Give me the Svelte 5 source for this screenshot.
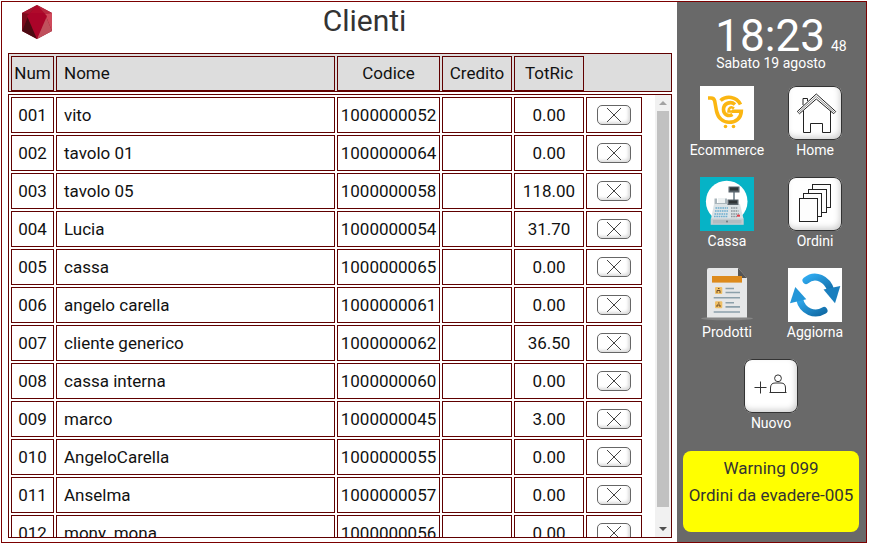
<script>
    import {onMount} from "svelte";

    const clients = [
        { num: '001', name: 'vito', code: '1000000052', credit: '', total: '0.00' },
        { num: '002', name: 'tavolo 01', code: '1000000064', credit: '', total: '0.00' },
        { num: '003', name: 'tavolo 05', code: '1000000058', credit: '', total: '118.00' },
        { num: '004', name: 'Lucia', code: '1000000054', credit: '', total: '31.70' },
        { num: '005', name: 'cassa', code: '1000000065', credit: '', total: '0.00' },
        { num: '006', name: 'angelo carella', code: '1000000061', credit: '', total: '0.00' },
        { num: '007', name: 'cliente generico', code: '1000000062', credit: '', total: '36.50' },
        { num: '008', name: 'cassa interna', code: '1000000060', credit: '', total: '0.00' },
        { num: '009', name: 'marco', code: '1000000045', credit: '', total: '3.00' },
        { num: '010', name: 'AngeloCarella', code: '1000000055', credit: '', total: '0.00' },
        { num: '011', name: 'Anselma', code: '1000000057', credit: '', total: '0.00' },
        { num: '012', name: 'mony_mona', code: '1000000056', credit: '', total: '0.00' }
    ];

    let rows = clients;
    let menu = ['Ecommerce', 'Home', 'Cassa', 'Ordini', 'Prodotti', 'Aggiorna', 'Nuovo'];
    const framed = new Set(['Home', 'Ordini', 'Nuovo']);

    let view;
    let thumbSize = 96; // percent of the track
    let thumbTop = 0;

    function updateThumb() {
        if (!view) return;
        thumbSize = Math.min(100, (view.clientHeight / view.scrollHeight) * 100);
        thumbTop = (view.scrollTop / view.scrollHeight) * 100;
    }

    function scrollList(step) {
        view.scrollTop += step;
        updateThumb();
    }

    function removeClient(num) {
        rows = rows.filter((row) => row.num !== num);
    }

    onMount(updateThumb);
</script>

<svelte:window on:resize={updateThumb} />

<div class="frame">
    <main>
        <header>
            <svg class="logo" viewBox="0 0 30 34" aria-hidden="true">
                <polygon points="15,0 30,8 30,26 15,34 0,26 0,8" fill="#8f0d24" />
                <polygon points="15,0 23,9 7,9" fill="#b00a2b" />
                <polygon points="15,0 7,9 0,8" fill="#a3152f" />
                <polygon points="15,0 30,8 23,9" fill="#b8283f" />
                <polygon points="0,8 7,9 0,26" fill="#7c0c1d" />
                <polygon points="7,9 15,34 0,26" fill="#4c0a12" />
                <polygon points="30,8 23,9 30,26" fill="#cf4a5b" />
                <polygon points="23,9 30,26 15,34" fill="#c0505c" />
                <polygon points="5,11 8,8 22,8 25,11 15,34" fill="#ab0429" />
            </svg>
            <h1>Clienti</h1>
        </header>

        <div class="head">
            <table aria-label="Colonne">
                <thead>
                    <tr>
                        <th class="num">Num</th>
                        <th class="name">Nome</th>
                        <th class="code">Codice</th>
                        <th class="amount">Credito</th>
                        <th class="amount">TotRic</th>
                        <td class="action blank"></td>
                    </tr>
                </thead>
            </table>
        </div>

        <div class="list">
            <div class="view" bind:this={view} on:scroll={updateThumb}>
                <table aria-label="Clienti">
                    <tbody>
                        {#each rows as row (row.num)}
                            <tr>
                                <td class="num">{row.num}</td>
                                <td class="name">{row.name}</td>
                                <td class="code">{row.code}</td>
                                <td class="amount">{row.credit}</td>
                                <td class="amount">{row.total}</td>
                                <td class="action">
                                    <button class="remove" aria-label="Elimina {row.name}" on:click={() => removeClient(row.num)}>
                                        <svg viewBox="0 0 16 16" aria-hidden="true">
                                            <path d="M1 1L15 15M15 1L1 15" />
                                        </svg>
                                    </button>
                                </td>
                            </tr>
                        {/each}
                    </tbody>
                </table>
            </div>
            <div class="scroll">
                <button aria-label="Su" on:click={() => scrollList(-38)}>
                    <svg viewBox="0 0 8 4" aria-hidden="true"><path d="M0 4L4 0L8 4Z" fill="#a3a3a3" /></svg>
                </button>
                <div class="track">
                    <div class="thumb" style="height: {thumbSize}%; top: {thumbTop}%;"></div>
                </div>
                <button aria-label="Giù" on:click={() => scrollList(38)}>
                    <svg viewBox="0 0 8 4" aria-hidden="true"><path d="M0 0L4 4L8 0Z" fill="#505050" /></svg>
                </button>
            </div>
        </div>
    </main>

    <aside>
        <div class="clock">
            <span class="time">18:23</span>
            <span class="seconds">48</span>
        </div>
        <div class="date">Sabato 19 agosto</div>

        <nav>
            {#each menu as item}
                <button class="tile">
                    <span class="icon" class:framed={framed.has(item)}>
                        <svg viewBox="0 0 54 54" aria-hidden="true">
                            {#if item === 'Ecommerce'}
                                <rect width="54" height="54" fill="#fff" />
                                <g fill="none" stroke="#fbb612" stroke-width="3.6">
                                    <path d="M8 12H11Q14 12 14.7 15L16.5 25C18 32 23 36.3 29 36.3C36 36.3 41 32 41.3 25.3H32" />
                                    <path d="M20.5 14.5C26 9.5 36.5 10 40.5 18.5" />
                                    <path d="M35 18.5C30.5 14.5 23.5 17.5 23.5 23.5C23.5 28.5 28.5 31 32.5 28.5" />
                                    <path d="M34 22.5C31 20 28.5 21.5 28.5 25.5H33" stroke-width="2.6" />
                                </g>
                                <circle cx="25.5" cy="40.5" r="1.8" fill="#fbb612" />
                                <circle cx="33.5" cy="40.5" r="1.8" fill="#fbb612" />
                            {:else if item === 'Home'}
                                <g fill="none" stroke="#222" stroke-width="1">
                                    <path d="M15 19V12.5H19.5V15" />
                                    <path d="M28.3 8L9.3 25.5L11.5 27.7L28.3 13L45.7 27.7L47.7 25.5Z" />
                                    <path d="M10.5 26.5L28.3 10.5L46.5 26.5" stroke="#888" />
                                    <path d="M15.5 24.5V46.5H22.5V37.5H34.5V46.5H42.5V25" />
                                </g>
                            {:else if item === 'Cassa'}
                                <rect width="54" height="54" fill="#06b3c6" />
                                <circle cx="26.7" cy="24.5" r="20.8" fill="#fff" />
                                <rect x="33" y="15" width="2" height="8" fill="#8c98a0" />
                                <rect x="28.5" y="9.5" width="11" height="6" fill="#59636a" />
                                <rect x="30" y="10.5" width="8" height="3" fill="#2f3436" />
                                <path d="M14.5 21.5H17V26H25V21.5H27V28H14.5Z" fill="#aab6bc" />
                                <rect x="18" y="21" width="7" height="5" fill="#edf1f2" />
                                <path d="M14 27H40L43.5 42H11Z" fill="#dce3e6" />
                                <rect x="27.5" y="22.5" width="11" height="5.5" fill="#59636a" />
                                <rect x="29" y="23.5" width="8" height="3" fill="#2f3436" />
                                <path d="M15.5 31H28M15 34H28M14.5 37H28M14 39.5H28" stroke="#6baed0" stroke-width="1.6" stroke-dasharray="1.6 .7" />
                                <path d="M31 31H38M31 34H38.5M31 37H39M31 39.5H37" stroke="#8b969d" stroke-width="1.6" stroke-dasharray="1.6 .7" />
                                <rect x="37" y="37.7" width="3" height="2" fill="#e3404a" />
                                <rect x="10.7" y="41.5" width="33" height="6.3" fill="#c3ccd0" />
                                <rect x="13" y="43" width="28.5" height="3.5" fill="#b1bcc1" />
                                <circle cx="27" cy="44.5" r=".9" fill="#66737a" />
                            {:else if item === 'Ordini'}
                                <g fill="#fdfdfd" stroke="#222" stroke-width="1">
                                    <rect x="24.5" y="7.5" width="18" height="23" />
                                    <rect x="20.5" y="12.5" width="18" height="23" />
                                    <rect x="15.5" y="16.5" width="18" height="23" />
                                    <rect x="11.5" y="21.5" width="18" height="23" />
                                </g>
                            {:else if item === 'Prodotti'}
                                <ellipse cx="27" cy="50.5" rx="26" ry="1.8" fill="#858585" />
                                <path d="M9 0H38L47 10V49.5H7V2Q7 0 9 0Z" fill="#e6e7e8" />
                                <path d="M38 0L47 10H40Q38 10 38 8Z" fill="#555" />
                                <rect x="12" y="8" width="30" height="6.6" fill="#dd8a1c" />
                                <rect x="15" y="19" width="7.3" height="7" rx="1" fill="#efbf66" />
                                <rect x="15" y="33.3" width="7.3" height="7" rx="1" fill="#efbf66" />
                                <path d="M17 25V22.5H20V25M18 20.5H19.5M17 39V37H20V39M18 35H19.5" fill="none" stroke="#6d4b27" stroke-width="1" />
                                <path d="M25.5 20.5H34M25.5 24.5H40M13.7 29.8H40M25.5 34.7H34M25.5 38.9H40M13.7 44H40" stroke="#8ca0aa" stroke-width="1.6" />
                            {:else if item === 'Aggiorna'}
                                <defs>
                                    <linearGradient id="sync" x1="0" y1="0" x2="1" y2="1">
                                        <stop offset="0" stop-color="#2fa9ee" />
                                        <stop offset="1" stop-color="#126da8" />
                                    </linearGradient>
                                </defs>
                                <rect width="54" height="54" fill="#fff" />
                                <path d="M18 12.5C27 5 39.5 10.5 43 23" fill="none" stroke="url(#sync)" stroke-width="7" stroke-linecap="round" />
                                <path d="M35.5 21.5L52.3 18L47 35.3Z" fill="#1a7fbe" />
                                <path d="M36 42.5C27 48 14.5 44 11.5 31" fill="none" stroke="url(#sync)" stroke-width="7" stroke-linecap="round" />
                                <path d="M7.3 19L18.3 31.3L2 35.3Z" fill="#2496d8" />
                            {:else}
                                <g fill="none" stroke="#333" stroke-width="1">
                                    <path d="M16.5 22.5V34.5M10.5 28.5H22.5" />
                                    <circle cx="34" cy="19.3" r="3.4" />
                                    <path d="M25.5 33.5H42.5M26.5 33.5V29Q26.5 24 31 24H37Q41.5 24 41.5 29V33.5" />
                                </g>
                            {/if}
                        </svg>
                    </span>
                    <span class="label">{item}</span>
                </button>
            {/each}
        </nav>

        <div class="warning" role="status">
            <div>Warning 099</div>
            <div>Ordini da evadere-005</div>
        </div>
    </aside>
</div>

<style>
    :global(body) {
        margin: 0;
        background: #fff;
        font-family: Roboto, "Liberation Sans", sans-serif;
    }

    .frame {
        display: flex;
        box-sizing: border-box;
        height: calc(100vh - 2px);
        margin: 1px 2px 1px 1px;
        border: 1px solid #7b0000;
    }

    main {
        display: flex;
        flex: 1;
        flex-direction: column;
        min-width: 0;
        padding-bottom: 4px;
    }

    header {
        display: flex;
        height: 51px;
        padding-left: 20px;
    }

    .logo {
        width: 30px;
        height: 34px;
        margin-top: 3px;
    }

    h1 {
        flex: 1;
        margin: 0;
        font-size: 30px;
        font-weight: 400;
        line-height: 38px;
        text-align: center;
        color: #333;
    }

    .head,
    .list {
        margin: 0 5px 0 6px;
        border: 1px solid #600000;
    }

    .head {
        padding-right: 27px;
        background: #ddd;
    }

    .head table {
        margin-bottom: -2px;
    }

    .list {
        display: flex;
        flex: 1;
        min-height: 0;
        margin-top: 2px;
    }

    .view {
        flex: 1;
        padding-right: 11px;
        overflow-y: auto;
        scrollbar-width: none;
    }

    table {
        width: 100%;
        table-layout: fixed;
        border-spacing: 2px;
        font-size: 17px;
        color: #111;
    }

    th,
    td {
        box-sizing: border-box;
        height: 36px;
        padding: 0 0 1px;
        border: 1px solid #600000;
        font-weight: 400;
        line-height: 20px;
        text-align: center;
    }

    .head th,
    .head td {
        height: 35px;
    }

    .num {
        width: 43px;
    }

    th.name,
    td.name {
        padding-left: 7px;
        text-align: left;
    }

    .code {
        width: 103px;
    }

    .amount {
        width: 70px;
    }

    .action {
        width: 56px;
    }

    td.blank {
        border: none;
    }

    .remove {
        display: block;
        width: 34px;
        height: 20px;
        margin: 0 auto;
        padding: 0;
        border: 1px solid #666;
        border-radius: 5px;
        background: #fff;
        box-shadow: inset -2px -2px 3px #ddd;
        cursor: pointer;
    }

    .remove svg {
        display: block;
        width: 16px;
        height: 16px;
        margin: 0 auto;
        fill: none;
        stroke: #444;
    }

    .scroll {
        display: flex;
        flex-direction: column;
        width: 16px;
        background: #f1f1f1;
    }

    .scroll button {
        display: flex;
        align-items: center;
        justify-content: center;
        height: 16px;
        padding: 0;
        border: none;
        background: none;
    }

    .scroll svg {
        width: 8px;
        height: 4px;
    }

    .track {
        position: relative;
        flex: 1;
        margin: 0 2px;
    }

    .thumb {
        position: absolute;
        width: 100%;
        background: #c1c1c1;
    }

    aside {
        display: flex;
        flex-direction: column;
        box-sizing: border-box;
        width: 189px;
        padding: 15px 7px 10px 6px;
        background: #696969;
        color: #fff;
    }

    .clock {
        display: flex;
        align-items: baseline;
        justify-content: center;
        gap: 6px;
        padding-left: 20px;
    }

    .time {
        font-size: 44px;
        line-height: 38px;
    }

    .seconds,
    .date,
    .tile {
        font-size: 14px;
    }

    .seconds,
    .date {
        line-height: 16px;
    }

    .date {
        text-align: center;
    }

    nav {
        display: flex;
        flex-wrap: wrap;
        justify-content: center;
        row-gap: 17px;
        margin-top: 15px;
    }

    .tile {
        display: flex;
        flex-direction: column;
        align-items: center;
        width: 88px;
        padding: 0;
        border: none;
        background: none;
        color: #fff;
        font-family: inherit;
        line-height: 20px;
        cursor: pointer;
    }

    .icon,
    .icon svg {
        display: block;
        width: 54px;
        height: 54px;
    }

    .framed {
        border-radius: 8px;
        background: #fff;
        box-shadow: inset 0 0 0 1px #333, inset -2px -3px 6px #ccc;
    }

    .warning {
        box-sizing: border-box;
        min-height: 81px;
        margin-top: auto;
        padding-top: 4px;
        border-radius: 8px;
        background: #ff0;
        color: #333;
        font-size: 17px;
        line-height: 27px;
        text-align: center;
        white-space: nowrap;
    }
</style>
